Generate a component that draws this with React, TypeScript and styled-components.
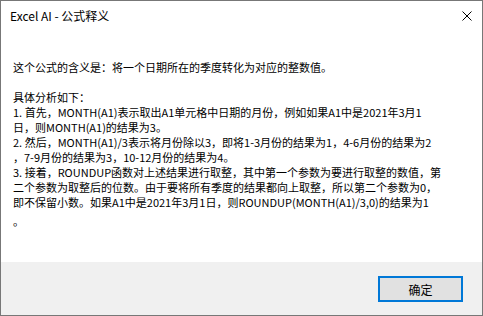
import React from "react";
import styled, { createGlobalStyle } from "styled-components";

const GlobalStyle = createGlobalStyle`
  html, body {
    margin: 0;
    padding: 0;
    background: #ffffff;
  }
`;

const Window = styled.div`
  box-sizing: border-box;
  width: 483px;
  height: 316px;
  display: flex;
  flex-direction: column;
  border: 1px solid #777777;
  background-color: #ffffff;
  font-family: "Noto Sans CJK SC", "Noto Sans", sans-serif;
  color: #000000;
  overflow: hidden;
`;

const TitleBar = styled.div`
  height: 30px;
  display: flex;
  align-items: center;
  justify-content: space-between;
  padding: 0 10px 0 9px;
  flex-shrink: 0;
`;

const Title = styled.div`
  font-size: 12px;
  line-height: 16px;
  margin-top: -1px;
`;

const CloseButton = styled.div`
  width: 10px;
  height: 10px;
  display: flex;
  margin-top: -1px;
`;

const Body = styled.div`
  flex: 1;
  padding: 29px 0 0 12px;
`;

const Line = styled.div<{ $drop?: number }>`
  font-size: 11px;
  line-height: 15px;
  height: 15px;
  white-space: nowrap;
  margin-top: ${({ $drop }) => $drop || 0}px;
`;

const Footer = styled.div`
  height: 53px;
  flex-shrink: 0;
  display: flex;
  justify-content: flex-end;
  padding: 14px 19px 0 0;
  box-sizing: border-box;
  background-color: #f0f0f0;
`;

const OkButton = styled.button`
  box-sizing: border-box;
  width: 85px;
  height: 26px;
  border: 2px solid #0078d7;
  background-color: #e1e1e1;
  font-family: "Noto Sans CJK SC", "Noto Sans", sans-serif;
  font-size: 12px;
  color: #000000;
  padding: 0;
  outline: none;
`;

const lines = [
  "这个公式的含义是：将一个日期所在的季度转化为对应的整数值。",
  "",
  "具体分析如下：",
  "1. 首先，MONTH(A1)表示取出A1单元格中日期的月份，例如如果A1中是2021年3月1",
  "日，则MONTH(A1)的结果为3。",
  "2. 然后，MONTH(A1)/3表示将月份除以3，即将1-3月份的结果为1，4-6月份的结果为2",
  "，7-9月份的结果为3，10-12月份的结果为4。",
  "3. 接着，ROUNDUP函数对上述结果进行取整，其中第一个参数为要进行取整的数值，第",
  "二个参数为取整后的位数。由于要将所有季度的结果都向上取整，所以第二个参数为0，",
  "即不保留小数。如果A1中是2021年3月1日，则ROUNDUP(MONTH(A1)/3,0)的结果为1",
  "。",
];

const App: React.FC = () => {
  return (
    <>
      <GlobalStyle />
      <Window>
        <TitleBar>
          <Title>Excel AI - 公式释义</Title>
          <CloseButton>
            <svg width="10" height="10" viewBox="0 0 10 10">
              <path d="M0.5 0.5 L9.5 9.5 M9.5 0.5 L0.5 9.5" stroke="#000" strokeWidth="1" />
            </svg>
          </CloseButton>
        </TitleBar>
        <Body>
          {lines.map((text, i) => (
            <Line key={i} $drop={i === lines.length - 1 ? 4 : 0}>
              {text}
            </Line>
          ))}
        </Body>
        <Footer>
          <OkButton>确定</OkButton>
        </Footer>
      </Window>
    </>
  );
};

export default App;
